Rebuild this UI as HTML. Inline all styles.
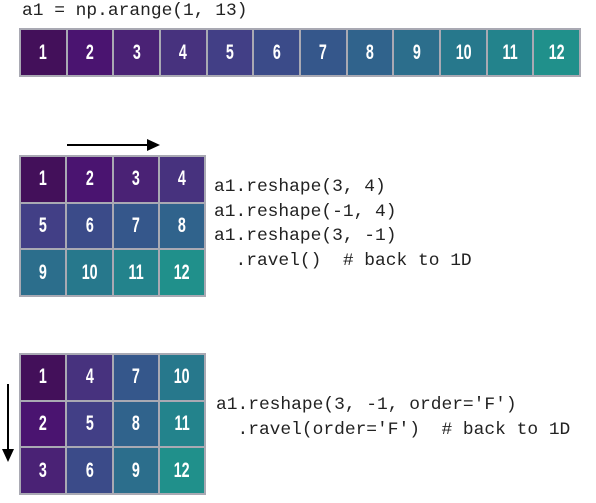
<!DOCTYPE html>
<html><head><meta charset="utf-8"><style>
body{margin:0;width:596px;height:503px;background:#fff;position:relative;overflow:hidden}
.code{position:absolute;font-family:"Liberation Mono","DejaVu Sans Mono",monospace;font-size:17.9px;color:#222;white-space:pre;line-height:24.7px}
.grid{position:absolute;display:grid;background:#a9a9b3;gap:2px;padding:2px;box-sizing:border-box}
.grid div{display:flex;align-items:center;justify-content:center;color:#fff;font-family:"Liberation Sans",sans-serif;font-weight:bold;font-size:21px}
.grid div span{display:inline-block;transform:scaleX(0.68)}
</style></head><body>
<div class="code" style="left:22px;top:-1px">a1 = np.arange(1, 13)</div>
<div class="grid" style="left:19px;top:28px;width:562px;height:49px;grid-template-columns:repeat(12,1fr)">
<div style="background:#43105a"><span>1</span></div><div style="background:#4a1470"><span>2</span></div><div style="background:#4a2275"><span>3</span></div><div style="background:#47327e"><span>4</span></div><div style="background:#423f86"><span>5</span></div><div style="background:#3b4b89"><span>6</span></div><div style="background:#35578b"><span>7</span></div><div style="background:#30638c"><span>8</span></div><div style="background:#2c6e8c"><span>9</span></div><div style="background:#27788c"><span>10</span></div><div style="background:#23838c"><span>11</span></div><div style="background:#20908b"><span>12</span></div>
</div>
<svg style="position:absolute;left:0;top:0" width="596" height="503">
<line x1="67" y1="145" x2="150" y2="145" stroke="#000" stroke-width="2"/>
<polygon points="147,139 160,145 147,151" fill="#000"/>
<line x1="8" y1="384" x2="8" y2="452" stroke="#000" stroke-width="2"/>
<polygon points="2,449 8,462 14,449" fill="#000"/>
</svg>
<div class="grid" style="left:19px;top:155px;width:187px;height:142px;grid-template-columns:repeat(4,1fr)">
<div style="background:#43105a"><span>1</span></div><div style="background:#4a1470"><span>2</span></div><div style="background:#4a2275"><span>3</span></div><div style="background:#47327e"><span>4</span></div>
<div style="background:#423f86"><span>5</span></div><div style="background:#3b4b89"><span>6</span></div><div style="background:#35578b"><span>7</span></div><div style="background:#30638c"><span>8</span></div>
<div style="background:#2c6e8c"><span>9</span></div><div style="background:#27788c"><span>10</span></div><div style="background:#23838c"><span>11</span></div><div style="background:#20908b"><span>12</span></div>
</div>
<div class="code" style="left:214px;top:175px">a1.reshape(3, 4)
a1.reshape(-1, 4)
a1.reshape(3, -1)
  .ravel()  # back to 1D</div>
<div class="grid" style="left:19px;top:353px;width:187px;height:142px;grid-template-columns:repeat(4,1fr)">
<div style="background:#43105a"><span>1</span></div><div style="background:#47327e"><span>4</span></div><div style="background:#35578b"><span>7</span></div><div style="background:#27788c"><span>10</span></div>
<div style="background:#4a1470"><span>2</span></div><div style="background:#423f86"><span>5</span></div><div style="background:#30638c"><span>8</span></div><div style="background:#23838c"><span>11</span></div>
<div style="background:#4a2275"><span>3</span></div><div style="background:#3b4b89"><span>6</span></div><div style="background:#2c6e8c"><span>9</span></div><div style="background:#20908b"><span>12</span></div>
</div>
<div class="code" style="left:216px;top:393px">a1.reshape(3, -1, order='F')
  .ravel(order='F')  # back to 1D</div>
</body></html>
